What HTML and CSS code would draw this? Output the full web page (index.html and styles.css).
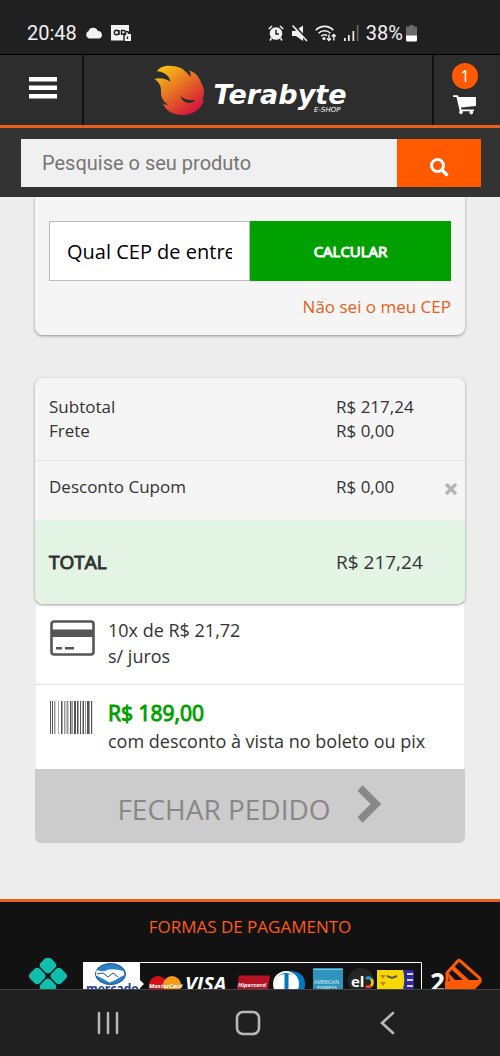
FILE: index.html
```
<!DOCTYPE html>
<html lang="pt-BR">
<head>
  <meta charset="UTF-8">
  <meta name="viewport" content="width=device-width, initial-scale=1">
  <title>Carrinho - Terabyte E-Shop</title>
  <link rel="stylesheet" href="styles.css">
</head>
<body>

  <div class="status-bar">
    <div class="status-left">
      <span>20:48</span>
      <svg width="18" height="12" viewBox="0 0 18 12"><path d="M4 11.500a4 4 0 0 1-.4-7.500A4.800 4.800 0 0 1 12.700 4a3.900 3.900 0 0 1 1.800 7.500z" fill="#f2f2f2"/></svg>
      <svg width="20" height="17" viewBox="0 0 20 17">
        <path d="M0 0h18v9h2v7h-6.500v-.5H0z" fill="#f2f2f2"/>
        <g fill="none" stroke="#202020" stroke-width="1.400"><circle cx="5.500" cy="7.500" r="2.200"/><path d="M8 5v5M10.500 10V5.500h2.500a1.800 1.800 0 0 1 0 3.500h-2"/><path d="M13 16V9.500h1.500V8a1.500 1.500 0 0 1 3 0v1"/><path d="M16.500 11.500v2.500"/></g>
      </svg>
    </div>
    <div class="status-right">
      <svg width="16" height="16" viewBox="0 0 16 16">
        <circle cx="8" cy="8.500" r="6.300" fill="#f2f2f2"/>
        <path d="M.8 4L4 1M15.200 4L12 1M3.500 13L2 15.500M12.500 13l1.500 2.500" stroke="#f2f2f2" stroke-width="1.600"/>
        <path d="M8 4.800V9h3" fill="none" stroke="#202020" stroke-width="1.500"/>
      </svg>
      <svg width="17" height="17" viewBox="0 0 17 17">
        <path d="M1 6h3l8-5.500v15.500L5 11H1z" fill="#f2f2f2"/>
        <path d="M3 0l14 15.500" stroke="#202020" stroke-width="2"/><path d="M1.500.5l14.500 15.500" stroke="#f2f2f2" stroke-width="1.600"/>
      </svg>
      <svg width="22" height="17" viewBox="0 0 22 17" fill="none" stroke="#f2f2f2" stroke-width="1.600">
        <path d="M.8 5.200a12 12 0 0 1 17.500 0M3.500 8.200a8.500 8.500 0 0 1 12 0M6.200 11.200a5 5 0 0 1 6-.6"/><circle cx="9" cy="13.500" r=".8" fill="#f2f2f2"/>
        <path d="M14 9.500v6M12 13.500l2 2 2-2M18.800 15.500v-6M16.800 11.500l2-2 2 2" stroke-width="1.400"/>
      </svg>
      <svg width="15" height="17" viewBox="0 0 15 17"><path d="M0 13h1.700v3H0zM4 10h1.700v6H4zM8.500 6h1.700v10H8.500z" fill="#f2f2f2"/><path d="M12.800 0h1.700v16h-1.700z" fill="#666"/></svg>
      <span class="charge">38%</span>
      <svg class="battery" width="11" height="17" viewBox="0 0 11 17"><path d="M3.500 0h4v1.500H10a1 1 0 0 1 1 1V11H0V2.500a1 1 0 0 1 1-1h2.500z" fill="#6b6b6b"/><path d="M0 10.500h11V15a1.500 1.500 0 0 1-1.500 1.500h-8A1.500 1.500 0 0 1 0 15z" fill="#fff"/></svg>
    </div>
  </div>

  <header class="topbar">
    <button class="menu-btn" aria-label="Menu">
      <svg width="28" height="22" viewBox="0 0 28 22" fill="#fff"><path d="M0 0h28v4.500H0zM0 8.500h28V13H0zM0 17h28v4.500H0z"/></svg>
    </button>
    <a class="logo" href="#">
      <svg width="50" height="50" viewBox="0 0 50 50">
        <defs>
          <linearGradient id="fire" x1="0" y1="0" x2=".75" y2="1">
            <stop offset="0" stop-color="#fbd30c"/>
            <stop offset=".3" stop-color="#ee9a1e"/>
            <stop offset=".6" stop-color="#e35f26"/>
            <stop offset="1" stop-color="#d3123c"/>
          </linearGradient>
        </defs>
        <path fill="url(#fire)" d="M2.700 6.300C6 2 10.500.5 15.500.7c8 .3 13 2 17 6.800 1.800 1.500 3 3 4 4.500.3-2.500 0-4.500-1.500-6.500C41 7 45 11.500 47 17.500c2 3 3.200 7 3 10.500-.3 3.500-1 5-2 6.500.8 0 1.500-.4 2-1C49 43 40 50 28.700 50 19 50 11.500 45.500 9 38.500c2 1.200 3.500 1.500 5 1.200-5.500-3.500-7.500-8.200-7-14.700C7 20.500 4.500 16.500.3 14c6-1.500 12-.5 16.200 3C15.500 11 10.500 6.500 2.700 6.300z"/>
        <path fill="#2d2d2d" d="M26.500 31c4.500 3.500 8 4.500 14.500 4-3 4.500-12 4.500-14.500-4z"/>
      </svg>
      <span class="logo-text">Terabyte<small>E-SHOP</small></span>
    </a>
    <a class="cart" href="#" aria-label="Carrinho">
      <span class="cart-count">1</span>
      <svg width="24" height="20" viewBox="0 0 24 20"><path d="M0 .3h5l.6 1.700H23v9L8 12.500l.5 2H21v1.800h-1.500a1.800 1.800 0 1 1-2.500 0H9.500a1.800 1.800 0 1 1-2.800-.3L3.500 2H0z" fill="#fff"/></svg>
    </a>
  </header>

  <form class="search">
    <input type="text" placeholder="Pesquise o seu produto" aria-label="Pesquise o seu produto">
    <button type="button" aria-label="Buscar">
      <svg width="20" height="20" viewBox="0 0 20 20" fill="none" stroke="#fff"><circle cx="8.500" cy="8.500" r="6" stroke-width="3"/><path d="M13 13l4.500 4.500" stroke-width="3.500" stroke-linecap="round"/></svg>
    </button>
  </form>

  <main class="content">
    <section class="card shipping">
      <div class="cep">
        <input type="text" placeholder="Qual CEP de entrega?" aria-label="Qual CEP de entrega?">
        <button type="button">CALCULAR</button>
      </div>
      <a class="cep-link" href="#">Não sei o meu CEP</a>
    </section>

    <section class="card summary">
      <div class="rows">
        <div class="row"><span>Subtotal</span><span>R$ 217,24</span></div>
        <div class="row"><span>Frete</span><span>R$ 0,00</span></div>
      </div>
      <div class="rows coupon">
        <div class="row">
          <span>Desconto Cupom</span><span>R$ 0,00</span>
          <button class="remove" aria-label="Remover cupom"><svg width="12" height="12" viewBox="0 0 12 12"><path d="M2 2l8 8M10 2l-8 8" stroke="#b5b5b5" stroke-width="3.500" stroke-linecap="round"/></svg></button>
        </div>
      </div>
      <div class="rows total">
        <div class="row"><strong>TOTAL</strong><span>R$ 217,24</span></div>
      </div>
    </section>

    <section class="payment">
      <div class="option">
        <svg width="46" height="36" viewBox="0 0 46 36"><rect x="1.500" y="1.500" width="42" height="33" rx="2.500" fill="#fff" stroke="#555" stroke-width="2.600"/><path d="M1 9.500h43V17H1z" fill="#555"/><path d="M6 27h6v2.600H6zM15 27h9v2.600h-9z" fill="#555"/></svg>
        <p>10x de R$ 21,72<br>s/ juros</p>
      </div>
      <div class="option boleto">
        <svg width="46" height="34" viewBox="0 0 46 34" fill="#555"><path d="M0 0h1v33H0zM2 0h1v33H2zM11 0h1.500v33H11zM20 0h1.500v33H20zM24 0h2v33h-2zM27 0h1.500v33H27zM30 0h1v33h-1zM32.500 0H34v33h-1.500zM37 0h2v33h-2zM41 0h1.200v33H41z"/><path fill="#999" d="M4 0h1.500v33H4zM8 0h.8v33H8zM14 0h1.500v33H14zM16.500 0h2v33h-2zM22 0h1v33h-1zM35 0h1v33h-1zM39 0h1v33h-1z"/></svg>
        <p><b>R$ 189,00</b>com desconto à vista no boleto ou pix</p>
      </div>
      <button class="checkout"><span>FECHAR PEDIDO</span>
        <svg width="26" height="38" viewBox="0 0 26 38"><path d="M3 3l16 16L3 35" fill="none" stroke="#888" stroke-width="7.500"/></svg>
      </button>
    </section>
  </main>

  <footer class="footer">
    <h2>FORMAS DE PAGAMENTO</h2>
    <div class="brands">
      <svg width="38" height="38" viewBox="0 0 38 38">
        <g fill="#0fbfae" transform="rotate(45 19 18)">
          <rect x="4.500" y="3.500" width="13.800" height="13.800" rx="4"/><rect x="19.700" y="3.500" width="13.800" height="13.800" rx="4"/>
          <rect x="4.500" y="18.700" width="13.800" height="13.800" rx="4"/><rect x="19.700" y="18.700" width="13.800" height="13.800" rx="4"/>
        </g>
      </svg>
      <svg class="flags" width="339" height="40" viewBox="0 0 339 40">
        <path d="M.5.500h338V40H.5z" fill="#111" stroke="#fff"/>
        <path d="M0 0h57v18l4 4-4 4v14H0z" fill="#fff"/>
        <ellipse cx="27.500" cy="12" rx="15" ry="10.500" fill="#2b7fc6" stroke="#1d4f96"/>
        <path d="M13.500 8q7 2.500 12-.5 7-1 15 1.500l1 4q-5 2-9 5l-6 2.500-7-4-6.500-3z" fill="#fff"/>
        <path d="M14 12l6-1 5 4 5-4 5 4" fill="none" stroke="#1d4f96"/>
        <text x="3" y="31" font-size="12" font-weight="bold" fill="#1c3f94">mercado</text>
        <circle cx="75" cy="23" r="9" fill="#d40f1a"/><circle cx="89" cy="23" r="9" fill="#f79a1c"/>
        <text x="66" y="26" font-size="6" font-weight="bold" font-style="italic" fill="#fff">MasterCard</text>
        <text x="102" y="29" font-size="20" font-weight="bold" font-style="italic" fill="#fff">VISA</text>
        <path d="M156 13.500h31L184 34h-31z" fill="#b51224"/>
        <text x="155" y="25" font-size="6" font-weight="bold" font-style="italic" fill="#fff">Hipercard</text>
        <path d="M203 9q19-1 19 13t-19 13z" fill="#0079c1"/><circle cx="203" cy="22" r="12" fill="#0079c1" stroke="#fff" stroke-width="2"/>
        <path d="M201.500 12a10 10 0 0 0 0 20zM205.500 12a10 10 0 0 1 0 20z" fill="#fff"/>
        <path d="M230 6h30v34h-30z" fill="#2e94bd"/><path d="M231 7.500h28" stroke="#7cc4dc"/>
        <text x="231" y="22" font-size="5" fill="#dff3fa">AMERICAN</text><text x="234" y="28" font-size="5" fill="#dff3fa">EXPRESS</text>
        <circle cx="278" cy="19" r="13" fill="#252525"/>
        <path d="M283 16.500a5 5 0 0 1 5 0" stroke="#18a6df" stroke-width="3" fill="none"/>
        <path d="M288 17a5 5 0 0 1 0 7" stroke="#f5c000" stroke-width="3" fill="none"/><path d="M288 24a5 5 0 0 1-5 0" stroke="#e8442e" stroke-width="3" fill="none"/>
        <text x="268" y="25" font-size="15" font-weight="bold" fill="#fff">el</text>
        <path d="M294 8h37v32h-37z" fill="#f7d800"/><path d="M320 8h11v32h-16q9-16 5-32z" fill="#2a2c9c"/>
        <path d="M324 12h6M324 18h6M324 24h6" stroke="#e9c7d9" stroke-width="2"/><path d="M304 14l5 2 5-2" fill="none" stroke="#555" stroke-width="2"/><path d="M297 13h6l-3 4zM297 20h6l-3 4z" fill="#b98a20"/>
      </svg>
      <div class="two-cards">
        <strong>2</strong>
        <svg width="38" height="38" viewBox="0 0 38 38"><path d="M2 15L12.500 3.200q1.500-1.500 3 0L34 19.500q2.500 3 0 5.500l-8 8H2z" fill="none" stroke="#ff5a00" stroke-width="3"/><path d="M2 13.500L10 22h25q1 2-1 4l-8 8H0V24l5-1zM9 8l15 14h-6L6 11z" fill="#ff5a00"/></svg>
      </div>
    </div>
  </footer>

  <nav class="nav-bar">
    <button aria-label="Recentes"><svg width="26" height="26" viewBox="0 0 26 26"><path d="M4 3v20M13 3v20M22 3v20" stroke="#b8b8b8" stroke-width="2.500" stroke-linecap="round"/></svg></button>
    <button aria-label="Início"><svg width="26" height="26" viewBox="0 0 26 26"><rect x="2" y="2" width="22" height="22" rx="6" fill="none" stroke="#b8b8b8" stroke-width="2.600"/></svg></button>
    <button aria-label="Voltar"><svg width="26" height="26" viewBox="0 0 26 26"><path d="M18 3L7 13l11 10" fill="none" stroke="#b8b8b8" stroke-width="2.600" stroke-linecap="round"/></svg></button>
  </nav>

</body>
</html>
```

FILE: styles.css
```
* {
  box-sizing: border-box;
}

body {
  margin: 0;
  height: 100vh;
  display: flex;
  flex-direction: column;
  overflow: hidden;
  background: #ededed;
  color: #333;
  font-family: 'Open Sans', 'Noto Sans', sans-serif;
  font-size: 17px;
  line-height: 24px;
}

button, input {
  font-family: inherit;
  border: none;
  border-radius: 0;
  margin: 0;
  padding: 0;
}

button {
  background: none;
  cursor: pointer;
}

a {
  text-decoration: none;
}

svg {
  display: block;
  flex-shrink: 0;
}

p {
  margin: 0;
}

/* barra de status */
.status-bar {
  flex: none;
  display: flex;
  justify-content: space-between;
  align-items: flex-end;
  height: 55px;
  padding: 0 83px 9px 27px;
  background: #202020;
  border-bottom: 1px solid #000;
  color: #f2f2f2;
  font-family: Roboto, sans-serif;
  font-size: 20px;
}

.status-left, .status-right {
  display: flex;
  align-items: center;
}

.status-left {
  gap: 8px;
}

.status-right {
  gap: 7px;
}

.battery {
  margin-left: -4px;
}

/* topo */
.topbar {
  flex: none;
  display: flex;
  height: 73px;
  background: #2d2d2d;
  border-bottom: 3px solid #e8601c;
}

.menu-btn {
  width: 84px;
  padding: 0 0 4px 3px;
  display: flex;
  align-items: center;
  justify-content: center;
  border-right: 2px solid #111;
}

.logo {
  flex: 1;
  display: flex;
  align-items: center;
  justify-content: center;
  gap: 10px;
  padding-right: 16px;
  color: #fff;
}

.logo-text {
  display: flex;
  flex-direction: column;
  padding-top: 16px;
  font-family: 'DejaVu Sans', sans-serif;
  font-size: 27px;
  font-weight: bold;
  font-style: italic;
  line-height: 24px;
}

.logo-text small {
  align-self: flex-end;
  padding-right: 6px;
  font-size: 7px;
  font-weight: normal;
  line-height: 6px;
}

.cart {
  width: 68px;
  padding-top: 8px;
  padding-right: 4px;
  border-left: 2px solid #111;
  display: flex;
  flex-direction: column;
  align-items: center;
  gap: 6px;
}

.cart-count {
  width: 26px;
  height: 26px;
  border-radius: 50%;
  background: #ff5a00;
  color: #fff;
  font-size: 16px;
  line-height: 26px;
  text-align: center;
}

.search {
  flex: none;
  display: flex;
  height: 69px;
  padding: 11px 19px 10px 21px;
  background: #333;
}

.search input {
  flex: 1;
  min-width: 0;
  padding: 0 21px;
  background: #f0f0f0;
  font-family: Roboto, sans-serif;
  font-size: 20px;
}

.search input::placeholder {
  color: #757575;
}

.search button {
  width: 84px;
  padding-top: 7px;
  background: #ff5a00;
  display: flex;
  align-items: center;
  justify-content: center;
}

/* carrinho */
.content {
  flex: none;
  padding: 0 35px 56px;
}

.card {
  background: #f5f5f5;
  border-radius: 8px;
  box-shadow: 0 1px 3px rgba(0,0,0,0.4);
}

.shipping {
  border-radius: 0 0 8px 8px;
  padding: 24px 14px 16px;
  margin-bottom: 43px;
}

.cep {
  display: flex;
  height: 60px;
  margin-bottom: 14px;
}

.cep input, .cep button {
  width: 50%;
}

.cep input {
  padding: 0 17px;
  border: 1px solid #bbb;
  background: #fff;
  font-size: 20px;
}

.cep input::placeholder {
  color: #000;
}

.cep button {
  background: #00a000;
  color: #fff;
  font-size: 15px;
  -webkit-text-stroke: 1px #fff;
}

.cep-link {
  display: block;
  text-align: right;
  color: #e8601c;
}

.summary {
  overflow: hidden;
  position: relative;
}

.rows {
  padding: 17px 14px;
}

.row {
  display: flex;
}

.row > :first-child {
  width: 287px;
}

.coupon {
  border-top: 1px solid #e5e5e5;
  padding: 14px 8px 21px 14px;
}

.remove {
  margin: 4px 0 0 auto;
}

.total {
  background: #e3f4e4;
  padding: 30px 14px;
  font-size: 19px;
}

.total strong {
  font-weight: 400;
  -webkit-text-stroke: 1px #333;
}

.option {
  display: flex;
  gap: 12px;
  margin: 0 1px;
  padding: 13px 14px 15px;
  background: #fff;
  font-size: 18px;
  line-height: 26px;
}

.option svg {
  margin-top: 3px;
}

.boleto {
  border-top: 1px solid #e5e5e5;
}

.boleto b {
  display: block;
  color: #00a000;
  font-size: 21px;
  font-weight: 400;
  line-height: 30px;
  -webkit-text-stroke: 1px #00a000;
}

.checkout {
  display: flex;
  width: 100%;
  height: 74px;
  align-items: flex-start;
  justify-content: center;
  gap: 26px;
  padding-top: 16px;
  background: #ccc;
  border-radius: 0 0 6px 6px;
  color: #888;
  font-size: 28px;
  line-height: 48px;
}

/* rodape */
.footer {
  flex: 1;
  min-height: 0;
  overflow: hidden;
  background: #121212;
  border-top: 3px solid #e8601c;
}

.footer h2 {
  margin: 13px 0 19px;
  color: #ff5a1c;
  font-size: 17px;
  font-weight: 400;
  text-align: center;
}

.brands {
  display: flex;
  justify-content: center;
  gap: 8px;
  padding-left: 12px;
}

.flags {
  margin: 4px 0 0 8px;
}

.flags text {
  font-family: 'Open Sans', sans-serif;
}

.two-cards {
  display: flex;
  color: #fff;
  font-size: 26px;
  line-height: 48px;
}

/* navegacao do aparelho */
.nav-bar {
  flex: none;
  display: flex;
  justify-content: center;
  gap: 114px;
  height: 67px;
  padding-right: 4px;
  background: #202020;
  border-top: 1px solid #444;
}
```
